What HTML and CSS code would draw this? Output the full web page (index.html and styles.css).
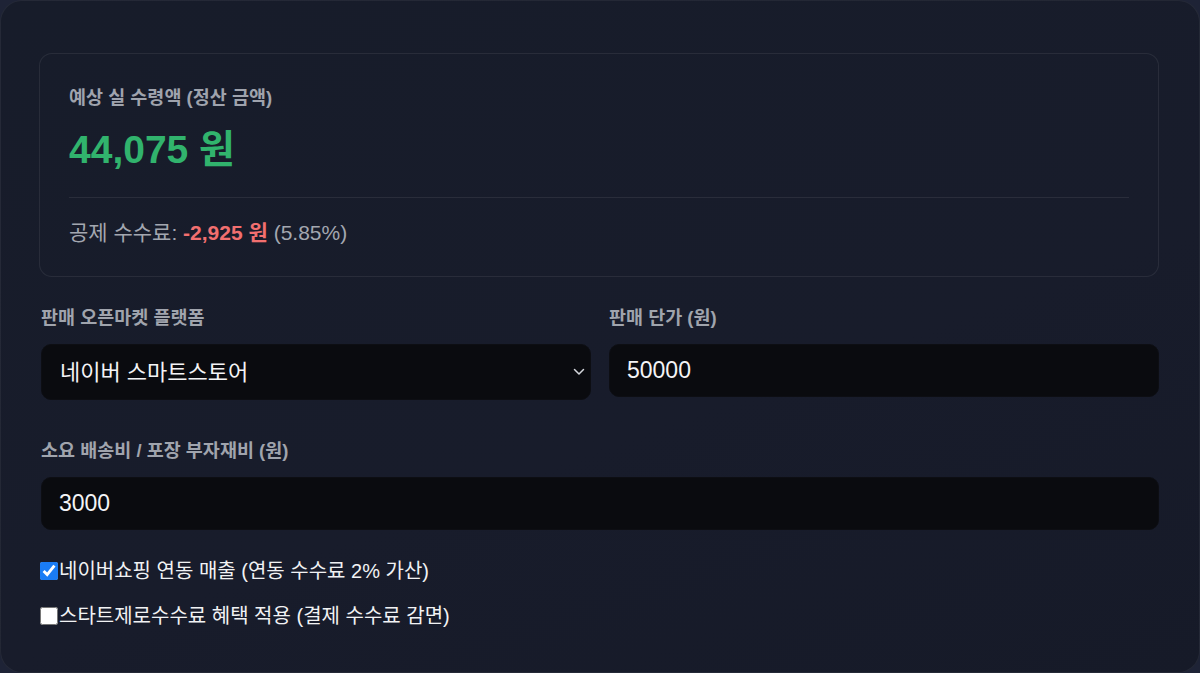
FILE: index.html
```html
<!DOCTYPE html>
<html lang="ko">
<head>
<meta charset="utf-8">
<title>정산 금액 계산기</title>
<link rel="stylesheet" href="styles.css">
</head>
<body>
<div class="panel">
  <section class="result">
    <div class="result-title">예상 실 수령액 (정산 금액)</div>
    <div class="result-amount">44,075 원</div>
    <div class="divider"></div>
    <div class="fee">공제 수수료: <span class="fee-amount">-2,925 원</span> (5.85%)</div>
  </section>

  <div class="row">
    <div class="field">
      <label class="field-label">판매 오픈마켓 플랫폼</label>
      <div class="select-wrap">
        <select class="control select">
          <option>네이버 스마트스토어</option>
        </select>
        <svg class="chevron" width="12" height="8" viewBox="0 0 12 8"><path d="M1.5 1.5 L6 6 L10.5 1.5" fill="none" stroke="#d4d6dc" stroke-width="1.5" stroke-linecap="round" stroke-linejoin="round"/></svg>
      </div>
    </div>
    <div class="field">
      <label class="field-label">판매 단가 (원)</label>
      <input class="control input" type="text" value="50000">
    </div>
  </div>

  <div class="field full">
    <label class="field-label">소요 배송비 / 포장 부자재비 (원)</label>
    <input class="control input" type="text" value="3000">
  </div>

  <label class="check first"><input type="checkbox" checked>네이버쇼핑 연동 매출 (연동 수수료 2% 가산)</label>
  <label class="check"><input type="checkbox">스타트제로수수료 혜택 적용 (결제 수수료 감면)</label>
</div>
</body>
</html>
```

FILE: styles.css
```css
* { box-sizing: border-box; }
html, body {
  margin: 0;
  height: 100%;
}
body {
  background: #1e2336;
  font-family: "Liberation Sans", "Noto Sans CJK KR", sans-serif;
  color: #e5e7eb;
  overflow: hidden;
}
.panel {
  width: 1200px;
  height: 673px;
  background: linear-gradient(160deg, #171c2a 0%, #181c2b 60%, #161a28 100%);
  border: 1px solid rgba(255, 255, 255, 0.06);
  border-radius: 22px;
  padding: 52px 40px 0 38px;
  display: flex;
  flex-direction: column;
}
.result {
  border: 1px solid rgba(255, 255, 255, 0.075);
  border-radius: 13px;
  padding: 32px 29px 30px 29px;
  background: rgba(255, 255, 255, 0.005);
}
.result-title {
  font-size: 18.5px;
  line-height: 24px;
  font-weight: 700;
  color: #9fa3ad;
}
.result-amount {
  margin-top: 17px;
  font-size: 39px;
  line-height: 46px;
  font-weight: 700;
  color: #31b36d;
}
.divider {
  margin-top: 24px;
  height: 1px;
  background: rgba(255, 255, 255, 0.08);
}
.fee {
  margin-top: 22px;
  font-size: 21px;
  line-height: 26px;
  color: #a3a7b0;
}
.fee-amount {
  color: #f26f6f;
  font-weight: 700;
}
.row {
  margin-top: 29px;
  display: grid;
  grid-template-columns: 1fr 1fr;
  gap: 18px;
  align-items: start;
  padding-left: 2px;
}
.field {
  display: flex;
  flex-direction: column;
}
.field.full {
  margin-top: 39px;
  padding-left: 2px;
}
.field-label {
  font-size: 18.5px;
  line-height: 24px;
  font-weight: 700;
  color: #a0a4ad;
  margin-bottom: 14px;
}
.control {
  width: 100%;
  background: #0a0b0f;
  border: 1px solid #0d0e13;
  border-radius: 10px;
  color: #f4f4f6;
  font-family: "Liberation Sans", "Noto Sans CJK KR", sans-serif;
  font-size: 22px;
  outline: none;
}
.input {
  height: 53px;
  padding: 0 17px;
  font-size: 23px;
}
.select-wrap {
  position: relative;
}
.select {
  height: 56px;
  padding: 0 18px;
  appearance: none;
  -webkit-appearance: none;
}
.chevron {
  position: absolute;
  right: 6px;
  top: 24px;
  width: 12px;
  height: 8px;
}
.check {
  display: flex;
  align-items: center;
  font-size: 20px;
  line-height: 26px;
  color: #f1f2f4;
  margin-left: 1px;
}
.check.first {
  margin-top: 28px;
}
.check + .check {
  margin-top: 19px;
}
.check input {
  margin: 0 1px 0 0;
  width: 18px;
  height: 18px;
  accent-color: #1a7cf5;
}
```
